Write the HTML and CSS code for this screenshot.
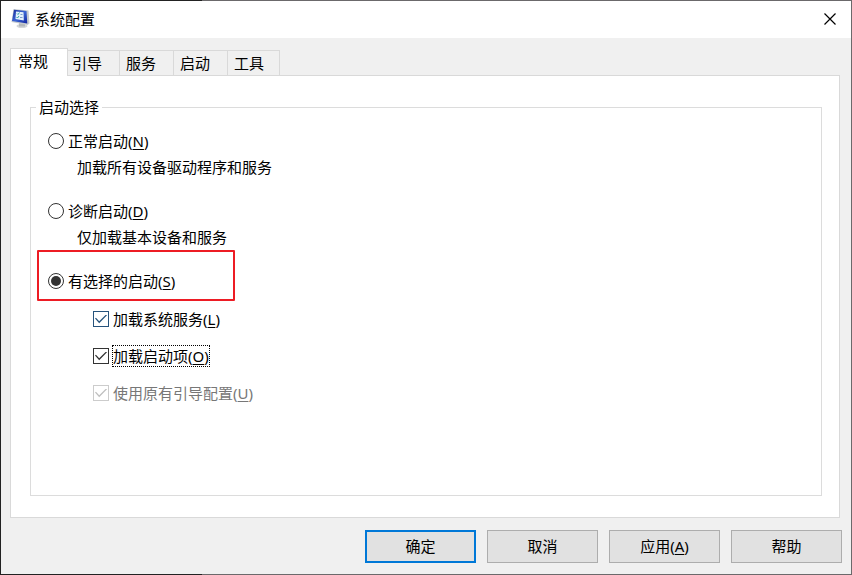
FILE: index.html
```html
<!DOCTYPE html>
<html lang="zh-CN">
<head>
<meta charset="utf-8">
<title>系统配置</title>
<link rel="stylesheet" href="styles.css">
</head>
<body>
<main class="window">
  <header class="titlebar">
    <svg class="app-icon" viewBox="0 0 20 20" aria-hidden="true">
      <defs>
        <linearGradient id="screen" x1="0" y1="0" x2="1" y2="1">
          <stop offset="0" stop-color="#1a2f9c"/>
          <stop offset="0.5" stop-color="#3c66d4"/>
          <stop offset="1" stop-color="#1023a0"/>
        </linearGradient>
      </defs>
      <ellipse cx="11" cy="17" rx="5.500" ry="2" fill="#d3d6d8"/>
      <path d="M8 14l6 1v2.500H8z" fill="#b4b8bb"/>
      <path d="M2.500 0L17.500 1.500 18.500 14.500 16.500 16 .5 13z" fill="#c5cace"/>
      <path d="M3 .8l12.500 1.200 .8 12.500L1 12z" fill="url(#screen)"/>
      <path d="M5 2.500l7.500.8.3 8.200L4.500 10z" fill="#e4f1fb"/>
      <path d="M6 4.500l1 1 1.500-2M5.500 8l1 1L8 7" fill="none" stroke="#35a0a8"/>
      <path d="M9.500 5.500h2M9 8.500h2.500" stroke="#7d9ccc"/>
    </svg>
    <h1 class="title">系统配置</h1>
    <button class="close" type="button" aria-label="关闭">
      <svg viewBox="0 0 12 12" aria-hidden="true"><path d="M.5.5l11 11M11.500.5l-11 11" fill="none" stroke="#000" stroke-width="1.200"/></svg>
    </button>
  </header>

  <form class="content">
    <div class="tabs" role="tablist">
      <button class="tab active" type="button" role="tab" aria-selected="true">常规</button>
      <button class="tab" type="button" role="tab">引导</button>
      <button class="tab" type="button" role="tab">服务</button>
      <button class="tab" type="button" role="tab">启动</button>
      <button class="tab" type="button" role="tab">工具</button>
    </div>

    <section class="panel" role="tabpanel">
      <fieldset class="group">
        <legend>启动选择</legend>
        <div class="option">
          <div class="choice">
            <input class="radio" type="radio" name="startup" id="normal">
            <label for="normal">正常启动(<u>N</u>)</label>
          </div>
          <p class="hint">加载所有设备驱动程序和服务</p>
        </div>
        <div class="option">
          <div class="choice">
            <input class="radio" type="radio" name="startup" id="diagnostic">
            <label for="diagnostic">诊断启动(<u>D</u>)</label>
          </div>
          <p class="hint">仅加载基本设备和服务</p>
        </div>
        <div class="option marked">
          <div class="choice">
            <input class="radio" type="radio" name="startup" id="selective" checked>
            <label for="selective">有选择的启动(<u>S</u>)</label>
          </div>
        </div>
        <div class="checks">
          <div class="check-row">
            <input class="check hot" type="checkbox" id="services" checked>
            <label for="services">加载系统服务(<u>L</u>)</label>
          </div>
          <div class="check-row">
            <input class="check" type="checkbox" id="items" checked>
            <label class="focused" for="items">加载启动项(<u>O</u>)</label>
          </div>
          <div class="check-row">
            <input class="check" type="checkbox" id="original" checked disabled>
            <label for="original">使用原有引导配置(<u>U</u>)</label>
          </div>
        </div>
      </fieldset>
    </section>

    <footer class="actions">
      <button class="button default" type="button">确定</button>
      <button class="button" type="button">取消</button>
      <button class="button" type="button">应用(<u>A</u>)</button>
      <button class="button" type="button">帮助</button>
    </footer>
  </form>
</main>
</body>
</html>
```
FILE: styles.css
```css
*,
*::before,
*::after {
  box-sizing: border-box;
}

body {
  margin: 0;
  padding: 1px;
  min-height: 100vh;
  display: flex;
  background: linear-gradient(to right, #222 202px, #6b696b 202px);
  color: #000;
  font: 15px/20px "Noto Sans", "Noto Sans CJK SC", sans-serif;
}

button {
  font: inherit;
  color: inherit;
}

u {
  text-underline-offset: 2px;
  text-decoration-thickness: 1px;
}

.window {
  flex: 1;
  display: flex;
  flex-direction: column;
  background: #f0f0f0;
}

.titlebar {
  display: flex;
  align-items: center;
  height: 37px;
  padding: 0 15px 2px 10px;
  background: #fff;
}

.app-icon {
  width: 20px;
  height: 20px;
  margin-right: 4px;
}

.title {
  flex: 1;
  margin: 0;
  font-size: 15px;
  line-height: 20px;
  font-weight: 400;
}

.close {
  display: flex;
  padding: 0;
  border: 0;
  background: none;
}

.close svg {
  width: 12px;
  height: 12px;
}

.content {
  flex: 1;
  display: flex;
  flex-direction: column;
  padding: 10px 9px 11px;
}

.tabs {
  display: flex;
  align-items: flex-end;
}

.tab {
  width: 54px;
  height: 25px;
  padding: 0 8px 0 6px;
  border: 1px solid #d9d9d9;
  border-width: 1px 1px 0 0;
  background: #f0f0f0;
  text-align: left;
}

.tab:last-child {
  width: 52px;
}

.tab.active {
  position: relative;
  width: 58px;
  height: 28px;
  margin-bottom: -1px;
  padding: 0 8px 4px 7px;
  border-left-width: 1px;
  background: #fff;
}

.tab.active + .tab {
  width: 52px;
  padding-left: 4px;
}

.panel {
  flex: 1;
  display: flex;
  margin-right: 2px;
  padding: 21px 17px 21px 19px;
  border: 1px solid #d9d9d9;
  background: #fff;
}

.group {
  flex: 1;
  min-width: 0;
  margin: 0;
  padding: 11px 17px;
  border: 1px solid #dcdcdc;
}

.group legend {
  margin-left: -12px;
  padding: 0 3px;
}

.option {
  position: relative;
  margin-bottom: 18px;
}

.choice {
  display: flex;
  align-items: center;
  gap: 4px;
  height: 26px;
}

.hint {
  margin: 0 0 0 29px;
  line-height: 26px;
}

.marked {
  margin-bottom: 15px;
}

.marked::after {
  content: "";
  position: absolute;
  top: -18px;
  left: -11px;
  width: 198px;
  height: 51px;
  border: 2px solid #ed1c24;
  border-radius: 1px;
  pointer-events: none;
}

.radio,
.check {
  appearance: none;
  flex: none;
  display: grid;
  place-items: center;
  width: 16px;
  height: 16px;
  margin: 0;
  border: 1px solid #333;
  background: #fff;
  color: #333;
}

.radio {
  border-radius: 50%;
}

.radio:checked::before {
  content: "";
  width: 10px;
  height: 10px;
  border-radius: 50%;
  background: currentColor;
}

.check:checked::before {
  content: "";
  width: 12px;
  height: 9px;
  background: currentColor;
  clip-path: polygon(0 45%, 8% 36%, 35% 74%, 92% 0, 100% 9%, 35% 96%);
}

.check.hot {
  border-color: #26537c;
  color: #26537c;
}

.check:disabled {
  border-color: #ccc;
  color: #bfbfbf;
}

.check:disabled + label {
  color: #777;
}

.checks {
  display: grid;
  gap: 17px;
  margin-left: 45px;
}

.check-row {
  display: flex;
  align-items: center;
  gap: 4px;
}

.focused {
  outline: 1px dotted #000;
}

.actions {
  display: flex;
  justify-content: flex-end;
  gap: 11px;
  margin-top: 12px;
}

.button {
  width: 111px;
  height: 33px;
  padding: 0 0 2px;
  border: 1px solid #adadad;
  background: #e1e1e1;
}

.button.default {
  border: 2px solid #0078d7;
}
```
